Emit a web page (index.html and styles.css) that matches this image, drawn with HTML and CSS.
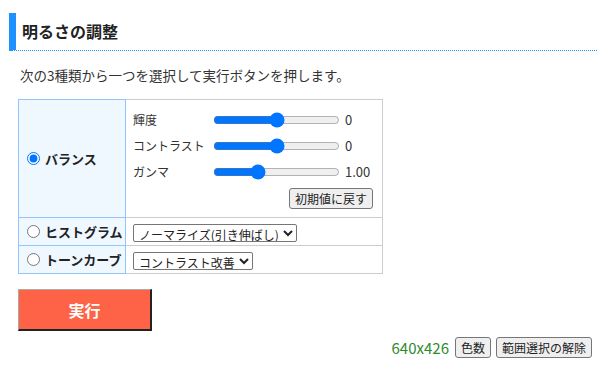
FILE: index.html
```html
<!DOCTYPE html>
<html lang="ja">
<head>
<meta charset="utf-8">
<link rel="stylesheet" href="styles.css">
</head>
<body>
<div class="page">
  <h2 class="heading">明るさの調整</h2>
  <p class="lead">次の3種類から一つを選択して実行ボタンを押します。</p>
  <table class="opts">
    <tr class="row-balance">
      <th><label class="opt"><input type="radio" name="m" checked> バランス</label></th>
      <td>
        <div class="sliders">
          <span class="lbl">輝度</span><input type="range" min="-100" max="100" value="0"><span class="val">0</span>
          <span class="lbl">コントラスト</span><input type="range" min="-100" max="100" value="0"><span class="val">0</span>
          <span class="lbl">ガンマ</span><input type="range" min="0.01" max="3" step="0.01" value="1"><span class="val">1.00</span>
        </div>
        <div class="reset"><button class="btn">初期値に戻す</button></div>
      </td>
    </tr>
    <tr class="row-small">
      <th><label class="opt"><input type="radio" name="m"> ヒストグラム</label></th>
      <td><select class="sel"><option>ノーマライズ(引き伸ばし)</option></select></td>
    </tr>
    <tr class="row-small">
      <th><label class="opt"><input type="radio" name="m"> トーンカーブ</label></th>
      <td><select class="sel"><option>コントラスト改善</option></select></td>
    </tr>
  </table>
  <button class="run">実行</button>
  <div class="footer">
    <span class="size">640x426</span>
    <button class="btn">色数</button>
    <button class="btn">範囲選択の解除</button>
  </div>
</div>
</body>
</html>
```
FILE: styles.css
```css
* { box-sizing: border-box; }
html, body { margin: 0; padding: 0; background: #fff; }
body {
  font-family: "Noto Sans CJK JP", "Noto Sans", sans-serif;
  font-size: 13px;
  color: #333;
}
.page { padding: 13px 9px 0 9px; }
.heading {
  margin: 0;
  height: 38px;
  border-left: 7px solid #1e90ff;
  border-bottom: 1px dotted #1e90ff;
  padding-left: 6px;
  font-size: 16px;
  font-weight: bold;
  color: #222;
  line-height: 36px;
}
.lead {
  margin: 14px 0 0 11px;
  line-height: 20px;
  font-size: 13.5px;
  color: #333;
}
.opts {
  margin: 14px 0 0 9px;
  border-collapse: collapse;
  width: 365px;
}
.opts th {
  width: 107px;
  background: #f0f8ff;
  border: 1px solid #90c6fa;
  text-align: left;
  font-weight: bold;
  padding: 0 0 0 8px;
  color: #222;
}
.opts td {
  border: 1px solid #ccc;
  padding: 0 9px 0 7px;
}
.opt { display: flex; align-items: center; gap: 5px; white-space: nowrap; }
.opt input { margin: 0; width: 13px; height: 13px; }
.row-balance td { height: 118px; padding-top: 4px; padding-bottom: 6px; }
.row-small td { height: 28px; }
.sliders {
  display: grid;
  grid-template-columns: 80px 131px auto;
  grid-auto-rows: 26px;
  align-items: center;
}
.sliders input { margin: 0; width: 127px; height: 16px; }
.lbl { color: #333; font-size: 12px; }
.val { padding-left: 1px; color: #333; }
.reset { display: flex; justify-content: flex-end; margin-top: 3px; }
.btn {
  font-family: "Noto Sans CJK JP", sans-serif;
  font-size: 12px;
  color: #222;
  background: #efefef;
  border: 1px solid #767676;
  border-radius: 3px;
  padding: 1px 5px;
  height: 21px;
  line-height: 17px;
}
.sel {
  font-family: "Noto Sans CJK JP", sans-serif;
  font-size: 12px;
  line-height: 14px;
  color: #222;
  height: 18px;
  padding: 0 0 0 1px;
  border: 1px solid #767676;
  border-radius: 2px;
  background: #fff;
  vertical-align: middle;
}
.run {
  display: block;
  margin: 15px 0 0 9px;
  width: 134px;
  height: 42px;
  background: #ff6347;
  color: #fff;
  font-family: "Noto Sans CJK JP", sans-serif;
  font-size: 16px;
  font-weight: bold;
  border-style: solid;
  border-width: 1px 2px 2px 1px;
  border-color: #aaa #222 #222 #aaa;
}
.footer {
  display: flex;
  justify-content: flex-end;
  align-items: center;
  gap: 5px;
  margin: 6px 5px 0 0;
}
.size { color: #2e8b2e; font-size: 15px; margin-right: 1px; }
```
